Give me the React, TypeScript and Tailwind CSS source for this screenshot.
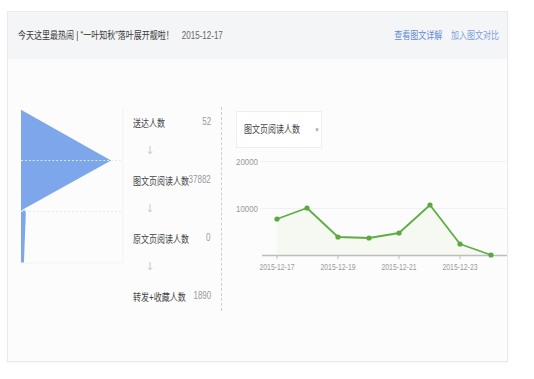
import React from "react";

const cjk = "font-['Liberation_Sans','Noto_Sans_CJK_SC',sans-serif]";

const pts: [number, number][] = [
  [55, 71],
  [85, 60],
  [116, 89],
  [147, 90],
  [177, 85],
  [208, 57],
  [238, 96],
  [269, 107],
];

function Row({ label, value }: { label: string; value: string }) {
  return (
    <div className="h-[29px] flex items-center">
      <div className="w-0 flex-1">
        <span className="inline-block origin-left scale-x-[0.8] whitespace-nowrap text-[10px] leading-none text-[#444]">
          {label}
        </span>
      </div>
      <span className="shrink-0 inline-block origin-right scale-x-[0.8] whitespace-nowrap text-[10px] leading-none text-[#999]">
        {value}
      </span>
    </div>
  );
}

function Arrow() {
  return (
    <div className="h-[29px] flex items-center pl-[14px]">
      <svg width="6" height="9" viewBox="0 0 6 9">
        <line x1="3" y1="0" x2="3" y2="8" stroke="#c9c9c9" strokeWidth="1" />
        <polyline points="1,5.5 3,8 5,5.5" fill="none" stroke="#c9c9c9" strokeWidth="1" />
      </svg>
    </div>
  );
}

export default function App() {
  const line = pts.map((p) => p.join(",")).join(" ");
  const area = `55,107 ${line} 269,107`;
  return (
    <div className={`w-[534px] h-[379px] bg-white overflow-hidden ${cjk}`}>
      <div className="ml-[7px] mt-[11px] w-[501px] h-[351px] border border-[#e9e9ee] bg-[#fcfcfd] shadow-[0_1px_2px_rgba(0,0,0,0.04)]">
        <div className="h-[47px] bg-[#f4f5f7] flex items-center justify-between pl-[10px] pr-[8px]">
          <span className="inline-block origin-left scale-x-[0.8] whitespace-nowrap text-[10px] leading-none text-[#3a3a3a]">
            今天这里最热闹 | “一叶知秋”落叶展开靓啦！
            <span className="ml-[10px] text-[#666]">2015-12-17</span>
          </span>
          <span className="inline-block origin-right scale-x-[0.8] whitespace-nowrap text-[10px] leading-none text-[#5f8ad6]">
            查看图文详解<span className="ml-[11px] text-[#7d9edd]">加入图文对比</span>
          </span>
        </div>
        <div className="pt-[48px] flex items-start">
          <svg width="110" height="160" className="ml-[13px]" viewBox="0 0 110 160">
            <line x1="104" y1="0" x2="104" y2="157" stroke="#f2f2f4" strokeWidth="1" />
            <line x1="0" y1="157.5" x2="104" y2="157.5" stroke="#f2f2f4" strokeWidth="1" />
            <polygon points="0,1 92,53 0,104" fill="#7da7ea" />
            <polygon points="0,104 5,104 3,157 0,157" fill="#7da7ea" />
            <line x1="0" y1="53" x2="104" y2="53" stroke="#dfe9f8" strokeWidth="1" strokeDasharray="2,2" />
            <line x1="0" y1="105" x2="104" y2="105" stroke="#e3e7ee" strokeWidth="1" strokeDasharray="2,2" />
          </svg>
          <div className="ml-[4px] w-[80px] flex flex-col">
            <Row label="送达人数" value="52" />
            <Arrow />
            <Row label="图文页阅读人数" value="37882" />
            <Arrow />
            <Row label="原文页阅读人数" value="0" />
            <Arrow />
            <Row label="转发+收藏人数" value="1890" />
          </div>
          <div className="ml-[10px] h-[204px] border-l border-dashed border-[#cfcfcf]" />
          <div className="flex flex-col">
            <div className="ml-[14px] mt-[4px] w-[86px] h-[37px] border border-[#eeeeee] bg-white flex items-center justify-between pl-[7px] pr-[6px]">
              <span className="inline-block origin-left scale-x-[0.8] whitespace-nowrap text-[10px] leading-none text-[#444]">
                图文页阅读人数
              </span>
              <span className="text-[6px] leading-none text-[#aaa]">▼</span>
            </div>
            <svg width="285" height="130" viewBox="0 0 285 130">
              <line x1="39" y1="13.5" x2="284" y2="13.5" stroke="#f1f1f3" strokeWidth="1" />
              <line x1="39" y1="60.5" x2="284" y2="60.5" stroke="#f1f1f3" strokeWidth="1" />
              <text x="14" y="17" fontSize="9.5" fill="#999" textLength="22" lengthAdjust="spacingAndGlyphs" fontFamily="Liberation Sans, sans-serif">
                20000
              </text>
              <text x="14" y="64" fontSize="9.5" fill="#999" textLength="22" lengthAdjust="spacingAndGlyphs" fontFamily="Liberation Sans, sans-serif">
                10000
              </text>
              <polygon points={area} fill="#f2f8ef" opacity="0.8" />
              <line x1="40" y1="107.5" x2="285" y2="107.5" stroke="#bdbdbd" strokeWidth="1.5" />
              {[55, 116, 177, 238].map((x) => (
                <line key={x} x1={x} y1="107" x2={x} y2="111" stroke="#bdbdbd" strokeWidth="1" />
              ))}
              <polyline points={line} fill="none" stroke="#5fae45" strokeWidth="1.8" strokeLinejoin="round" />
              {pts.map(([x, y]) => (
                <circle key={x} cx={x} cy={y} r="2.6" fill="#5aa83e" />
              ))}
              {[
                [55, "2015-12-17"],
                [116, "2015-12-19"],
                [177, "2015-12-21"],
                [238, "2015-12-23"],
              ].map(([x, t]) => (
                <text
                  key={t as string}
                  x={x as number}
                  y="122"
                  fontSize="9.5"
                  fill="#999"
                  textAnchor="middle"
                  textLength="35"
                  lengthAdjust="spacingAndGlyphs"
                  fontFamily="Liberation Sans, sans-serif"
                >
                  {t}
                </text>
              ))}
            </svg>
          </div>
        </div>
      </div>
    </div>
  );
}
